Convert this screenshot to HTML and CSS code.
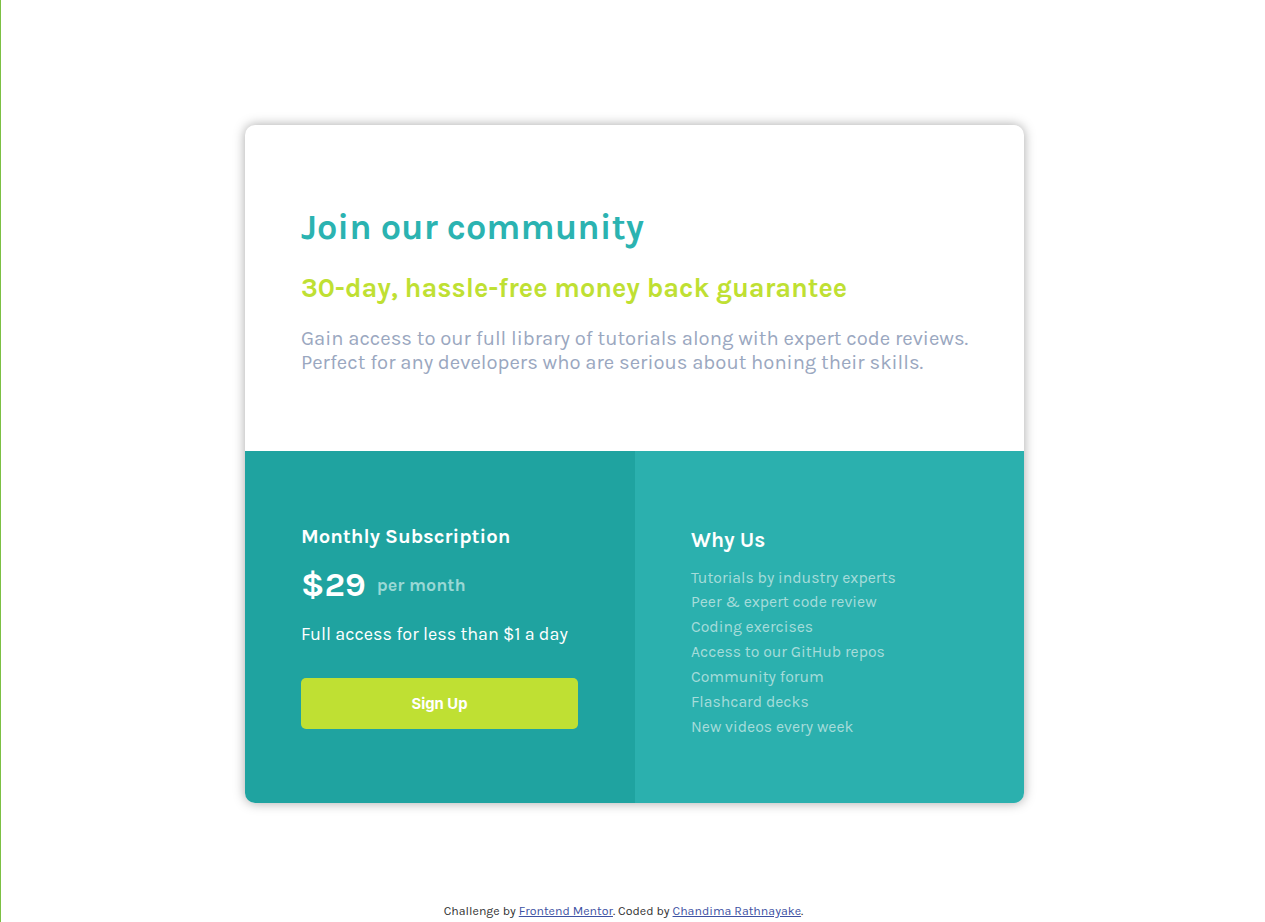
FILE: index.html
```html
<!DOCTYPE html>
<html lang="en">
<head>
<meta charset="utf-8">
<title>Join our community</title>
<link rel="stylesheet" href="styles.css">
</head>
<body>
<div class="edge"></div>
<main class="page">
  <section class="card">
    <div class="intro">
      <h1 class="title">Join our community</h1>
      <h2 class="subtitle">30-day, hassle-free money back guarantee</h2>
      <p class="lead">Gain access to our full library of tutorials along with expert code reviews. Perfect for any developers who are serious about honing their skills.</p>
    </div>
    <div class="bottom">
      <div class="sub">
        <h3 class="sub-title">Monthly Subscription</h3>
        <div class="price"><span class="amount">$29</span><span class="per">per month</span></div>
        <p class="sub-note">Full access for less than $1 a day</p>
        <button class="btn">Sign Up</button>
      </div>
      <div class="why">
        <h3 class="why-title">Why Us</h3>
        <ul class="why-list">
          <li>Tutorials by industry experts</li>
          <li>Peer &amp; expert code review</li>
          <li>Coding exercises</li>
          <li>Access to our GitHub repos</li>
          <li>Community forum</li>
          <li>Flashcard decks</li>
          <li>New videos every week</li>
        </ul>
      </div>
    </div>
  </section>
  <footer class="attribution">Challenge by <a href="#">Frontend Mentor</a>. Coded by <a href="#">Chandima Rathnayake</a>.</footer>
</main>
</body>
</html>
```
FILE: styles.css
```css
* { box-sizing: border-box; }
html, body { margin: 0; padding: 0; background: #fff; }
body {
  font-family: "Karla", "Noto Sans", "Liberation Sans", sans-serif;
  min-height: 922px;
  position: relative;
}
.edge {
  position: absolute;
  left: 0; top: 0; bottom: 0;
  width: 1px;
  background: #7cc043;
}
.page {
  display: flex;
  flex-direction: column;
  align-items: center;
  padding: 125px 0 0 4px;
}
.card {
  width: 779px;
  border-radius: 10px;
  overflow: hidden;
  box-shadow: 0 0 12px rgba(0,0,0,0.35);
  background: #fff;
}
.intro {
  height: 326px;
  padding: 80px 30px 0 56px;
}
.title {
  margin: 0;
  color: #2bb3b1;
  font-size: 36px;
  font-weight: 700;
  line-height: 44px;
}
.subtitle {
  margin: 23px 0 0;
  color: #bfe033;
  font-size: 27px;
  font-weight: 700;
  line-height: 32px;
}
.lead {
  margin: 22px 0 0;
  color: #9aa7c0;
  font-size: 20.25px;
  line-height: 24px;
}
.bottom {
  display: flex;
  height: 352px;
}
.sub {
  width: 390px;
  background: #1fa3a0;
  padding: 71px 56px 0;
}
.why {
  flex: 1;
  background: #2bb0ae;
  padding: 75px 56px 0;
}
.sub-title {
  margin: 0;
  color: #fff;
  font-size: 20.3px;
  font-weight: 700;
  line-height: 28px;
}
.why-title {
  margin: 0;
  color: #fff;
  font-size: 21px;
  font-weight: 700;
  line-height: 28px;
}
.price {
  display: flex;
  align-items: center;
  margin-top: 15px;
  height: 40px;
}
.amount {
  color: #fff;
  font-size: 34px;
  font-weight: 700;
  line-height: 40px;
}
.per {
  margin-left: 11px;
  color: #9ad8d5;
  font-size: 18px;
  font-weight: 700;
}
.sub-note {
  margin: 17px 0 0;
  color: #fff;
  font-size: 18px;
  line-height: 24px;
}
.btn {
  display: block;
  margin-top: 32px;
  width: 277px;
  height: 51px;
  border: 0;
  border-radius: 5px;
  background: #bfe033;
  color: #fff;
  font-family: "Inter", "Roboto", sans-serif;
  font-size: 14.8px;
  font-weight: 700;
}
.why-list {
  list-style: none;
  margin: 11.5px 0 0;
  padding: 0;
  color: #a6dcda;
  font-size: 15.8px;
  line-height: 24.85px;
}
.attribution {
  margin-top: 101px;
  margin-left: -22px;
  font-size: 12.4px;
  color: #333;
}
.attribution a { color: #3e52a3; }
```
